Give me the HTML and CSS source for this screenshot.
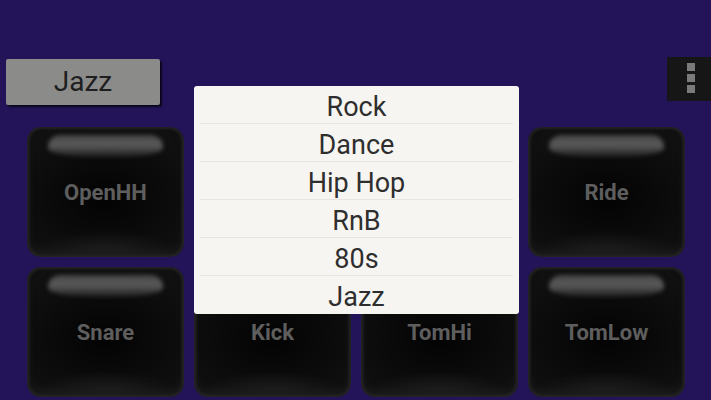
FILE: index.html
```html
<!DOCTYPE html>
<html lang="en">

<head>
    <meta charset="UTF-8">
    <meta name="viewport" content="width=device-width, initial-scale=1.0">
    <title>Drum Pads</title>
    <link rel="stylesheet" href="styles.css">
</head>

<body>
    <div class="top-bar">
        <button class="style-btn">Jazz</button>
        <div class="menu-btn">
            <span></span>
            <span></span>
            <span></span>
        </div>
    </div>

    <div class="pads">
        <div class="pad"><span>OpenHH</span></div>
        <div class="pad"></div>
        <div class="pad"></div>
        <div class="pad"><span>Ride</span></div>
        <div class="pad"><span>Snare</span></div>
        <div class="pad"><span>Kick</span></div>
        <div class="pad"><span>TomHi</span></div>
        <div class="pad"><span>TomLow</span></div>
    </div>

    <ul class="style-menu">
        <li>Rock</li>
        <li>Dance</li>
        <li>Hip Hop</li>
        <li>RnB</li>
        <li>80s</li>
        <li>Jazz</li>
    </ul>
</body>

</html>
```

FILE: styles.css
```css
body {
    margin: 0;
    height: 400px;
    overflow: hidden;
    background-color: #231459;
    font-family: Roboto, "Noto Sans", sans-serif;
    position: relative;
}

.top-bar {
    display: flex;
    justify-content: space-between;
    align-items: flex-start;
    padding-top: 59px;
    height: 46px;
}

.style-btn {
    margin-left: 6px;
    width: 154px;
    height: 46px;
    border: none;
    border-radius: 2px;
    background-color: #8b8b89;
    color: #1e1e1e;
    font-family: Roboto, sans-serif;
    font-size: 28px;
    padding: 0 0 2px;
    box-shadow: 2px 2px 2px rgba(0, 0, 0, 0.7);
}

.menu-btn {
    margin-top: -2px;
    width: 44px;
    height: 44px;
    background-color: #161616;
    display: flex;
    flex-direction: column;
    align-items: center;
    padding-top: 6px;
    padding-left: 4px;
    gap: 3px;
    box-sizing: border-box;
}

.menu-btn span {
    width: 8px;
    height: 8px;
    background-color: #7a7a7a;
}

.pads {
    display: grid;
    grid-template-columns: repeat(4, 157px);
    grid-auto-rows: 130px;
    gap: 10px;
    padding: 22px 0 0 27px;
}

.pad {
    position: relative;
    border-radius: 14px;
    background:
        radial-gradient(ellipse 60% 25% at 50% 100%, rgba(60, 60, 60, 0.5), rgba(0, 0, 0, 0) 80%),
        radial-gradient(ellipse 70% 60% at 50% 55%, #030303, #101010 90%);
    box-shadow: inset 0 0 3px 2px #262626, inset 0 -6px 8px #1a1a1a;
    display: flex;
    align-items: center;
    justify-content: center;
}

.pad::before {
    content: "";
    position: absolute;
    left: 21px;
    right: 21px;
    top: 8px;
    height: 22px;
    border-radius: 12px 12px 40% 40%;
    background: linear-gradient(#454545, #5a5a5a 45%, rgba(40, 40, 40, 0.6));
    filter: blur(2px);
}

.pad span {
    color: #5e5e5e;
    font-weight: bold;
    font-size: 22px;
}

.style-menu {
    position: absolute;
    left: 194px;
    top: 86px;
    width: 325px;
    margin: 0;
    padding: 0;
    list-style: none;
    background-color: #f7f5f1;
    border-radius: 3px;
}

.style-menu li {
    height: 38px;
    line-height: 42px;
    text-align: center;
    font-size: 27px;
    color: #2e2e2e;
    border-bottom: 1px solid #e8e6e1;
    box-sizing: border-box;
    margin: 0 6px;
}

.style-menu li:last-child {
    border-bottom: none;
}
```
